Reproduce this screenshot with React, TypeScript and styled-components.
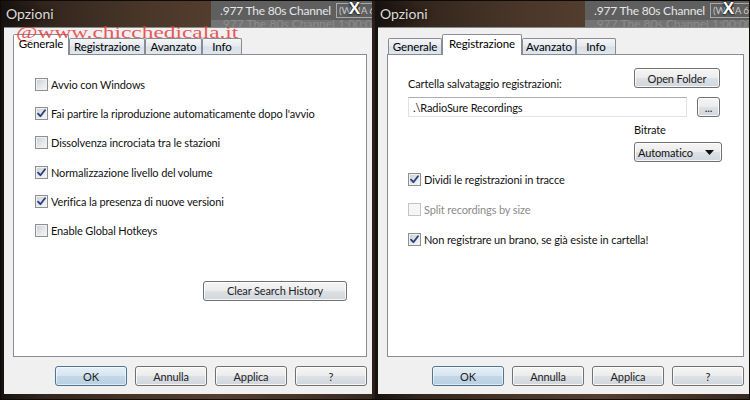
import React from "react";
import styled, { createGlobalStyle, css } from "styled-components";

const UI = `Lato, "Noto Sans", "Liberation Sans", sans-serif`;

const Global = createGlobalStyle`
  html, body { margin: 0; padding: 0; background: #1c1511; }
  body { width: 750px; height: 400px; overflow: hidden; }
  #root { width: 750px; height: 400px; }
  * { box-sizing: border-box; }
`;

const uiText = css`
  font: 11px ${UI};
  letter-spacing: -0.12px;
`;

const Screen = styled.div`
  position: relative;
  width: 750px;
  height: 400px;
  display: flex;
  gap: 3px;
  background: #2a1f18;
  border: 1px solid #0d0a08;
  overflow: hidden;
`;

const Window = styled.div<{ $w: number }>`
  width: ${(p) => p.$w}px;
  flex: none;
  display: flex;
  flex-direction: column;
  padding-bottom: 5px;
  background: linear-gradient(90deg, #17120f 0%, #33261d 12%, #4a372a 40%, #553e2f 60%, #382a20 100%);
`;

const TitleBar = styled.div`
  height: 26px;
  display: flex;
  align-items: stretch;
`;

const TitleText = styled.div`
  width: 210px;
  flex: none;
  padding: 4px 0 0 5px;
  font: 14px ${UI};
  color: #dadada;
  text-shadow: 0 0 6px rgba(0, 0, 0, 0.7);
`;

const NowPlaying = styled.div`
  flex: 1;
  position: relative;
  display: flex;
  flex-direction: column;
  overflow: hidden;
`;

const NowTop = styled.div`
  height: 19px;
  background: #5f5f5f;
  display: flex;
  align-items: center;
  padding-left: 9px;
  gap: 5px;
  font: 12px ${UI};
  letter-spacing: -0.2px;
  color: #e6e6e6;
  white-space: nowrap;
`;

const Badge = styled.span`
  border: 1px solid #a9a9a9;
  padding: 0 2px;
  color: #c9c9c9;
  font-size: 10px;
  line-height: 13px;
`;

const NowBottom = styled.div`
  flex: 1;
  background: #737373;
  padding-left: 9px;
  font: 12px ${UI};
  color: #8c8c8c;
  line-height: 8px;
  white-space: nowrap;
  overflow: hidden;
`;

const CloseX = styled.span<{ $r: number }>`
  position: absolute;
  top: -2px;
  right: ${(p) => p.$r}px;
  font: bold 17px "Liberation Sans", sans-serif;
  color: #ffffff;
  text-shadow: 0 0 3px #000, 0 0 2px #000;
`;

const Client = styled.div<{ $pr: number }>`
  flex: 1;
  display: flex;
  flex-direction: column;
  margin-left: 3px;
  background: #f0f0f0;
  border-top: 1px solid #8a8a8a;
  padding: 6px ${(p) => p.$pr}px 8px 9px;
`;

const TabStrip = styled.div<{ $pl: number }>`
  display: flex;
  align-items: flex-end;
  height: 21px;
  padding-left: ${(p) => p.$pl}px;
  margin-bottom: -1px;
  position: relative;
  z-index: 1;
`;

const Tab = styled.div<{ $w: number; $active?: boolean }>`
  width: ${(p) => p.$w}px;
  height: 16px;
  margin-bottom: 1px;
  display: flex;
  align-items: center;
  justify-content: center;
  border: 1px solid #898c95;
  border-bottom: none;
  border-radius: 2px 2px 0 0;
  background: linear-gradient(#f4f5f7 0%, #e6ebf1 45%, #d8e1ea 55%, #dfe6ee 100%);
  ${uiText}
  font-size: 11.5px;
  color: #000;
  white-space: nowrap;
  ${(p) =>
    p.$active &&
    css`
      height: 21px;
      margin-bottom: 0;
      padding-bottom: 4px;
      background: #ffffff;
    `}
`;

const Panel = styled.div`
  flex: 1;
  background: #ffffff;
  border: 1px solid #898c95;
  display: flex;
  flex-direction: column;
`;

const ButtonRow = styled.div`
  margin-top: 9px;
  display: flex;
  justify-content: flex-end;
  gap: 8px;
`;

const Btn = styled.button<{ $w: number; $default?: boolean }>`
  width: ${(p) => p.$w}px;
  height: 20px;
  flex: none;
  padding: 0;
  ${uiText}
  color: #222;
  border: 1px solid #707070;
  border-radius: 3px;
  background: linear-gradient(#f5f5f5 0%, #ececec 48%, #dde1e5 52%, #d0d6dc 100%);
  box-shadow: inset 0 0 0 1px rgba(255, 255, 255, 0.8);
  ${(p) =>
    p.$default &&
    css`
      border-color: #4f7594;
      background: linear-gradient(#e6eff6 0%, #d6e5f1 48%, #c3d7e7 52%, #b9d0e3 100%);
      box-shadow: inset 0 0 0 1px rgba(255, 255, 255, 0.55);
    `}
`;

const CheckList = styled.div<{ $gap: number; $pt: number; $pl: number }>`
  display: flex;
  flex-direction: column;
  gap: ${(p) => p.$gap}px;
  padding: ${(p) => p.$pt}px 0 0 ${(p) => p.$pl}px;
`;

const CheckRow = styled.div<{ $disabled?: boolean }>`
  height: 16px;
  display: flex;
  align-items: center;
  gap: 3px;
  ${uiText}
  color: ${(p) => (p.$disabled ? "#8a8a8a" : "#111")};
  white-space: nowrap;
`;

const Box = styled.span<{ $disabled?: boolean }>`
  width: 13px;
  height: 13px;
  flex: none;
  display: flex;
  align-items: center;
  justify-content: center;
  border: 1px solid ${(p) => (p.$disabled ? "#c4c4c4" : "#8e8f8f")};
  background: ${(p) =>
    p.$disabled
      ? "#f5f5f5"
      : "linear-gradient(135deg, #c9ccd0 0%, #e6e7e9 55%, #f7f7f7 100%)"};
  box-shadow: inset 0 0 0 1px ${(p) => (p.$disabled ? "#f7f7f7" : "#eef0f2")};
`;

const Footer = styled.div`
  margin-top: 42px;
  display: flex;
  justify-content: flex-end;
  padding-right: 19px;
`;

const RecContent = styled.div`
  display: flex;
  flex-direction: column;
  padding: 13px 23px 0 20px;
`;

const RowBetween = styled.div`
  display: flex;
  justify-content: space-between;
  align-items: flex-end;
`;

const Label = styled.span<{ $drop?: number }>`
  ${uiText}
  color: #111;
  line-height: 14px;
  margin-bottom: ${(p) => -(p.$drop ?? 0)}px;
`;

const PathRow = styled.div`
  margin-top: 9px;
  display: flex;
  gap: 10px;
  align-items: flex-start;
`;

const TextField = styled.div`
  flex: 1;
  height: 20px;
  display: flex;
  align-items: center;
  padding-left: 4px;
  background: #fff;
  border: 1px solid #dfe3e8;
  border-top-color: #abadb3;
  ${uiText}
  color: #111;
`;

const BitrateRow = styled.div`
  margin-top: 6px;
  display: flex;
  justify-content: flex-end;
  margin-right: -2px;
`;

const BitrateBlock = styled.div`
  width: 88px;
  display: flex;
  flex-direction: column;
  gap: 5px;
`;

const Select = styled.div`
  height: 20px;
  display: flex;
  align-items: center;
  justify-content: space-between;
  padding: 0 7px 0 3px;
  border: 1px solid #707070;
  border-radius: 3px;
  background: linear-gradient(#f5f5f5 0%, #ececec 48%, #dde1e5 52%, #d0d6dc 100%);
  box-shadow: inset 0 0 0 1px rgba(255, 255, 255, 0.8);
  ${uiText}
  color: #111;
`;

const Watermark = styled.div`
  position: absolute;
  left: 15px;
  top: 24px;
  font: 16px/16px "Liberation Serif", serif;
  color: rgba(228, 52, 52, 0.82);
  transform: scaleX(1.46);
  transform-origin: left top;
  white-space: nowrap;
  z-index: 5;
  pointer-events: none;
`;

const Check = () => (
  <svg width="9" height="9" viewBox="0 0 9 9">
    <path d="M1 4.6 L3.4 7.2 L8 1.3" fill="none" stroke="#23407a" strokeWidth="1.8" strokeLinecap="round" strokeLinejoin="round" />
  </svg>
);

const Caret = () => (
  <svg width="9" height="5" viewBox="0 0 9 5">
    <path d="M0 0 H9 L4.5 5 Z" fill="#111" />
  </svg>
);

type CB = { label: string; checked?: boolean; disabled?: boolean };

const CheckItem = ({ label, checked, disabled }: CB) => (
  <CheckRow $disabled={disabled}>
    <Box $disabled={disabled}>{checked && <Check />}</Box>
    <span>{label}</span>
  </CheckRow>
);

const tabsLeft = [
  { t: "Generale", w: 56, a: true },
  { t: "Registrazione", w: 76 },
  { t: "Avanzato", w: 57 },
  { t: "Info", w: 40 },
];
const tabsRight = [
  { t: "Generale", w: 54 },
  { t: "Registrazione", w: 80, a: true },
  { t: "Avanzato", w: 54 },
  { t: "Info", w: 40 },
];

const generale: CB[] = [
  { label: "Avvio con Windows" },
  { label: "Fai partire la riproduzione automaticamente dopo l'avvio", checked: true },
  { label: "Dissolvenza incrociata tra le stazioni" },
  { label: "Normalizzazione livello del volume", checked: true },
  { label: "Verifica la presenza di nuove versioni", checked: true },
  { label: "Enable Global Hotkeys" },
];

const registrazione: CB[] = [
  { label: "Dividi le registrazioni in tracce", checked: true },
  { label: "Split recordings by size", disabled: true },
  { label: "Non registrare un brano, se già esiste in cartella!", checked: true },
];

const Title = ({ x }: { x: number }) => (
  <TitleBar>
    <TitleText>Opzioni</TitleText>
    <NowPlaying>
      <NowTop>
        <span>.977 The 80s Channel</span>
        <Badge>(WMA 64k)</Badge>
      </NowTop>
      <NowBottom>.977 The 80s Channel 1:00:00</NowBottom>
      <CloseX $r={x}>X</CloseX>
    </NowPlaying>
  </TitleBar>
);

const Buttons = () => (
  <ButtonRow>
    <Btn $w={72} $default>OK</Btn>
    <Btn $w={72}>Annulla</Btn>
    <Btn $w={72}>Applica</Btn>
    <Btn $w={72}>?</Btn>
  </ButtonRow>
);

export default function App() {
  return (
    <>
      <Global />
      <Screen>
        <Window $w={371}>
          <Title x={12} />
          <Client $pr={5}>
            <TabStrip $pl={0}>
              {tabsLeft.map((t) => (
                <Tab key={t.t} $w={t.w} $active={t.a}>{t.t}</Tab>
              ))}
            </TabStrip>
            <Panel>
              <CheckList $gap={13.4} $pt={21} $pl={21}>
                {generale.map((c) => (
                  <CheckItem key={c.label} {...c} />
                ))}
              </CheckList>
              <Footer>
                <Btn $w={144}>Clear Search History</Btn>
              </Footer>
            </Panel>
            <Buttons />
          </Client>
        </Window>
        <Window $w={375}>
          <Title x={16} />
          <Client $pr={6}>
            <TabStrip $pl={1}>
              {tabsRight.map((t) => (
                <Tab key={t.t} $w={t.w} $active={t.a}>{t.t}</Tab>
              ))}
            </TabStrip>
            <Panel>
              <RecContent>
                <RowBetween>
                  <Label $drop={3}>Cartella salvataggio registrazioni:</Label>
                  <Btn $w={86}>Open Folder</Btn>
                </RowBetween>
                <PathRow>
                  <TextField>.\RadioSure Recordings</TextField>
                  <Btn $w={23}>...</Btn>
                </PathRow>
                <BitrateRow>
                  <BitrateBlock>
                    <Label>Bitrate</Label>
                    <Select>
                      <span>Automatico</span>
                      <Caret />
                    </Select>
                  </BitrateBlock>
                </BitrateRow>
              </RecContent>
              <CheckList $gap={14} $pt={9} $pl={20}>
                {registrazione.map((c) => (
                  <CheckItem key={c.label} {...c} />
                ))}
              </CheckList>
            </Panel>
            <Buttons />
          </Client>
        </Window>
        <Watermark>@www.chicchedicala.it</Watermark>
      </Screen>
    </>
  );
}
